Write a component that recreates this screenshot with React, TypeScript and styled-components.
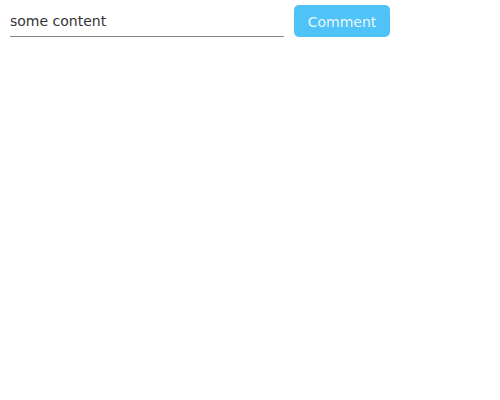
import React from "react";
import styled, { createGlobalStyle } from "styled-components";

const Global = createGlobalStyle`
  body { margin: 0; background: #fff; font-family: "DejaVu Sans", sans-serif; }
`;

const Row = styled.div`
  display: flex;
  align-items: flex-start;
  gap: 10px;
  padding: 5px 10px;
`;

const Input = styled.input`
  box-sizing: border-box;
  width: 274px;
  height: 32px;
  border: none;
  border-bottom: 1px solid #888;
  outline: none;
  padding: 0;
  font-family: "DejaVu Sans", sans-serif;
  font-size: 14px;
  color: #333;
  background: transparent;
`;

const Button = styled.button`
  box-sizing: border-box;
  width: 96px;
  height: 32px;
  border: none;
  border-radius: 5px;
  background: #4fc3f7;
  color: #e8f6fe;
  font-family: "DejaVu Sans", sans-serif;
  font-size: 14px;
  padding: 1px 0 0;
  cursor: pointer;
`;

export default function App() {
  return (
    <>
      <Global />
      <Row>
        <Input defaultValue="some content" />
        <Button>Comment</Button>
      </Row>
    </>
  );
}
